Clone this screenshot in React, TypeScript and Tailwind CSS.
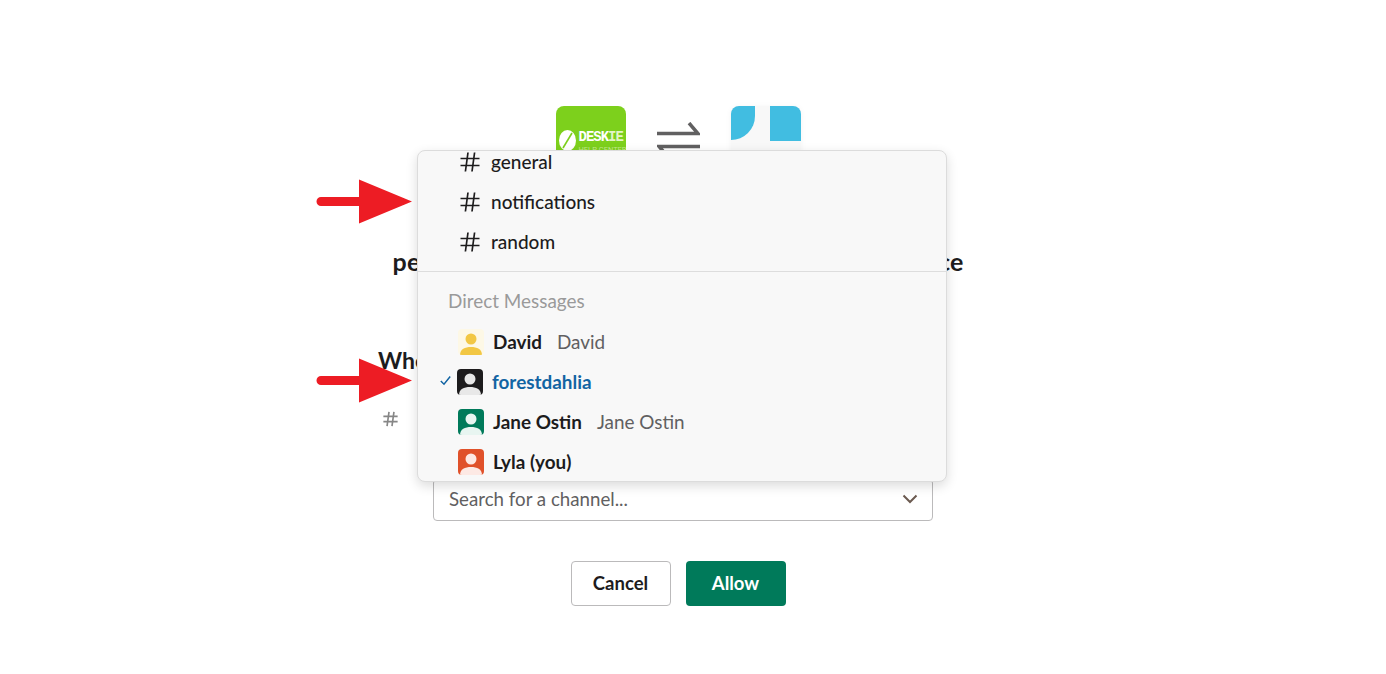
const FONT = "font-['Lato','Liberation_Sans',sans-serif]";

function Hash({ className, weight = 1.7 }: { className: string; weight?: number }) {
  return (
    <svg className={className} viewBox="0 0 20 20" fill="none" stroke="currentColor" strokeWidth={weight}>
      <path d="M0.5 6.5H19.5M0.5 13.5H19.5M8 0.5L5.4 19.5M14.6 0.5L12 19.5" />
    </svg>
  );
}

function RedArrow({ className }: { className: string }) {
  return (
    <svg className={className} width="97" height="45" viewBox="0 0 97 45">
      <path d="M5 18H43V0.5L96 22.5L43 44.5V27H5a4.500 4.500 0 0 1 0-9z" fill="#ed1c24" />
    </svg>
  );
}

function Avatar({ bg, fg }: { bg: string; fg: string }) {
  return (
    <svg width="26" height="26" viewBox="0 0 26 26" className="shrink-0 rounded-[4px]" style={{ background: bg }}>
      <circle cx="13" cy="10" r="5.500" fill={fg} />
      <path d="M2 26c0-6 5-8 11-8S24 20 24 26z" fill={fg} />
    </svg>
  );
}

function ChannelRow({ name }: { name: string }) {
  return (
    <div className="flex h-10 items-center pl-[42px]">
      <Hash className="h-[20px] w-[20px] text-[#1d1c1d]" />
      <span className="ml-[11px] text-[19px] font-medium text-[#1d1c1d]">{name}</span>
    </div>
  );
}

function PersonRow({
  name,
  full,
  bg,
  fg,
  selected,
}: {
  name: string;
  full?: string;
  bg: string;
  fg: string;
  selected?: boolean;
}) {
  return (
    <div className={`relative flex h-10 items-center ${selected ? "pl-[39px]" : "pl-[40px]"}`}>
      {selected && (
        <svg className="absolute left-[22px] top-[13px]" width="11" height="11" viewBox="0 0 11 11" fill="none">
          <path d="M0.800 6L4 9.200L10.200 1.500" stroke="#1264a3" strokeWidth="1.500" />
        </svg>
      )}
      <Avatar bg={bg} fg={fg} />
      <span className={`ml-[9px] text-[18.900px] font-bold ${selected ? "text-[#1264a3]" : "text-[#1d1c1d]"}`}>{name}</span>
      {full && <span className="ml-[15px] text-[18.900px] text-[#616061]">{full}</span>}
    </div>
  );
}

function ChannelMenu() {
  return (
    <div className="absolute left-[39px] top-[150px] h-[332px] w-[530px] overflow-hidden rounded-lg border border-[#dcdcdc] bg-[#f8f8f8] shadow-[0_4px_12px_rgba(0,0,0,0.14)]">
      <div className="-mt-[9px]">
        <ChannelRow name="general" />
        <ChannelRow name="notifications" />
        <ChannelRow name="random" />
        <div className="mt-[9px] border-t border-[#dddddd]" />
        <div className="mt-[17px] pl-[30px] text-[18.900px] leading-[24px] text-[#9a9a9a]">Direct Messages</div>
        <div className="mt-[9px]">
          <PersonRow name="David" full="David" bg="#fdf8e6" fg="#f2c744" />
          <PersonRow name="forestdahlia" bg="#1d1c1d" fg="#e8e8e8" selected />
          <PersonRow name="Jane Ostin" full="Jane Ostin" bg="#007a5a" fg="#e8f5f1" />
          <PersonRow name="Lyla (you)" bg="#e0512a" fg="#fde9e4" />
        </div>
      </div>
    </div>
  );
}

function DeskieLogo() {
  return (
    <div className="flex h-[70px] w-[70px] items-start gap-[3px] overflow-hidden rounded-lg bg-[#7dd01c] pl-[3px] pt-[24px]">
      <svg className="shrink-0" width="17" height="21" viewBox="0 0 17 21">
        <ellipse cx="8.500" cy="10.500" rx="8.500" ry="10.500" fill="#fff" />
        <path d="M4 18L13 3" stroke="#7dd01c" strokeWidth="1.600" />
      </svg>
      <div className="font-['Liberation_Mono',monospace] font-bold text-white">
        <div className="mt-[1px] text-[14px] leading-[13px] tracking-[-1px]">
          DESK<span className="text-[#e2f5c6]">IE</span>
        </div>
        <div className="mt-[1px] whitespace-nowrap font-['Roboto',sans-serif] text-[7.500px] font-normal leading-[9px] text-[#c4eb8e]">
          HELP CENTER
        </div>
      </div>
    </div>
  );
}

function BlueLogo() {
  return (
    <div className="flex h-[70px] w-[70px] justify-between rounded-lg bg-[#f8f8f8] shadow-[0_1px_6px_rgba(0,0,0,0.05)]">
      <div className="h-[34px] w-[24px] rounded-tl-lg rounded-br-[24px] bg-[#41bde1]" />
      <div className="h-[35px] w-[31px] rounded-tr-lg bg-[#41bde1]" />
    </div>
  );
}

function SwapIcon() {
  return (
    <svg width="43" height="38" viewBox="0 0 43 38" fill="none" stroke="#616061" strokeWidth="3.500">
      <path d="M0 11.500H41L32 1M43 24.500H2L11 35" />
    </svg>
  );
}

export default function App() {
  return (
    <div className={`relative min-h-[674px] overflow-hidden bg-white pr-[30px] pt-[106px] text-[#1d1c1d] ${FONT}`}>
      <div className="relative mx-auto flex w-[600px] flex-col items-center">
        <div className="flex items-center gap-[31px]">
          <DeskieLogo />
          <SwapIcon />
          <BlueLogo />
        </div>
        <h1 className="mt-[37px] w-full text-center text-[25px] font-bold leading-8 tracking-[0.16px]">
          Deskie Help Center is requesting
          <br />
          permission to access your forestdahlia's workspace
        </h1>
        <div className="mt-[69px] w-full text-[23px] font-bold leading-7">Where should Deskie Help Center post?</div>
        <div className="mt-[36px] w-full pl-[5px]">
          <Hash className="h-[18px] w-[15px] text-[#868686]" weight={2.2} />
        </div>
        <div className="ml-[10px] mt-[51px] flex h-[42px] w-[500px] items-center justify-between rounded-[4px] border border-[#bbbabb] pb-[2px] pl-[15px] pr-[14px]">
          <span className="text-[18.700px] text-[#616061]">Search for a channel...</span>
          <svg width="16" height="10" viewBox="0 0 16 10" fill="none">
            <path d="M1.500 1.500L8 8L14.500 1.500" stroke="#6b5a50" strokeWidth="2" />
          </svg>
        </div>
        <div className="mt-[40px] flex gap-[15px]">
          <button className="h-[45px] w-[100px] rounded-[4px] border border-[#bbbabb] bg-white text-[18.500px] font-bold">Cancel</button>
          <button className="h-[45px] w-[100px] rounded-[4px] bg-[#007a5a] text-[18.500px] font-bold text-white">Allow</button>
        </div>
      </div>
      <div className="absolute left-[378px] top-0 h-0 w-[600px]">
        <ChannelMenu />
      </div>
      <RedArrow className="absolute left-[316px] top-[179px]" />
      <RedArrow className="absolute left-[316px] top-[358px]" />
    </div>
  );
}
